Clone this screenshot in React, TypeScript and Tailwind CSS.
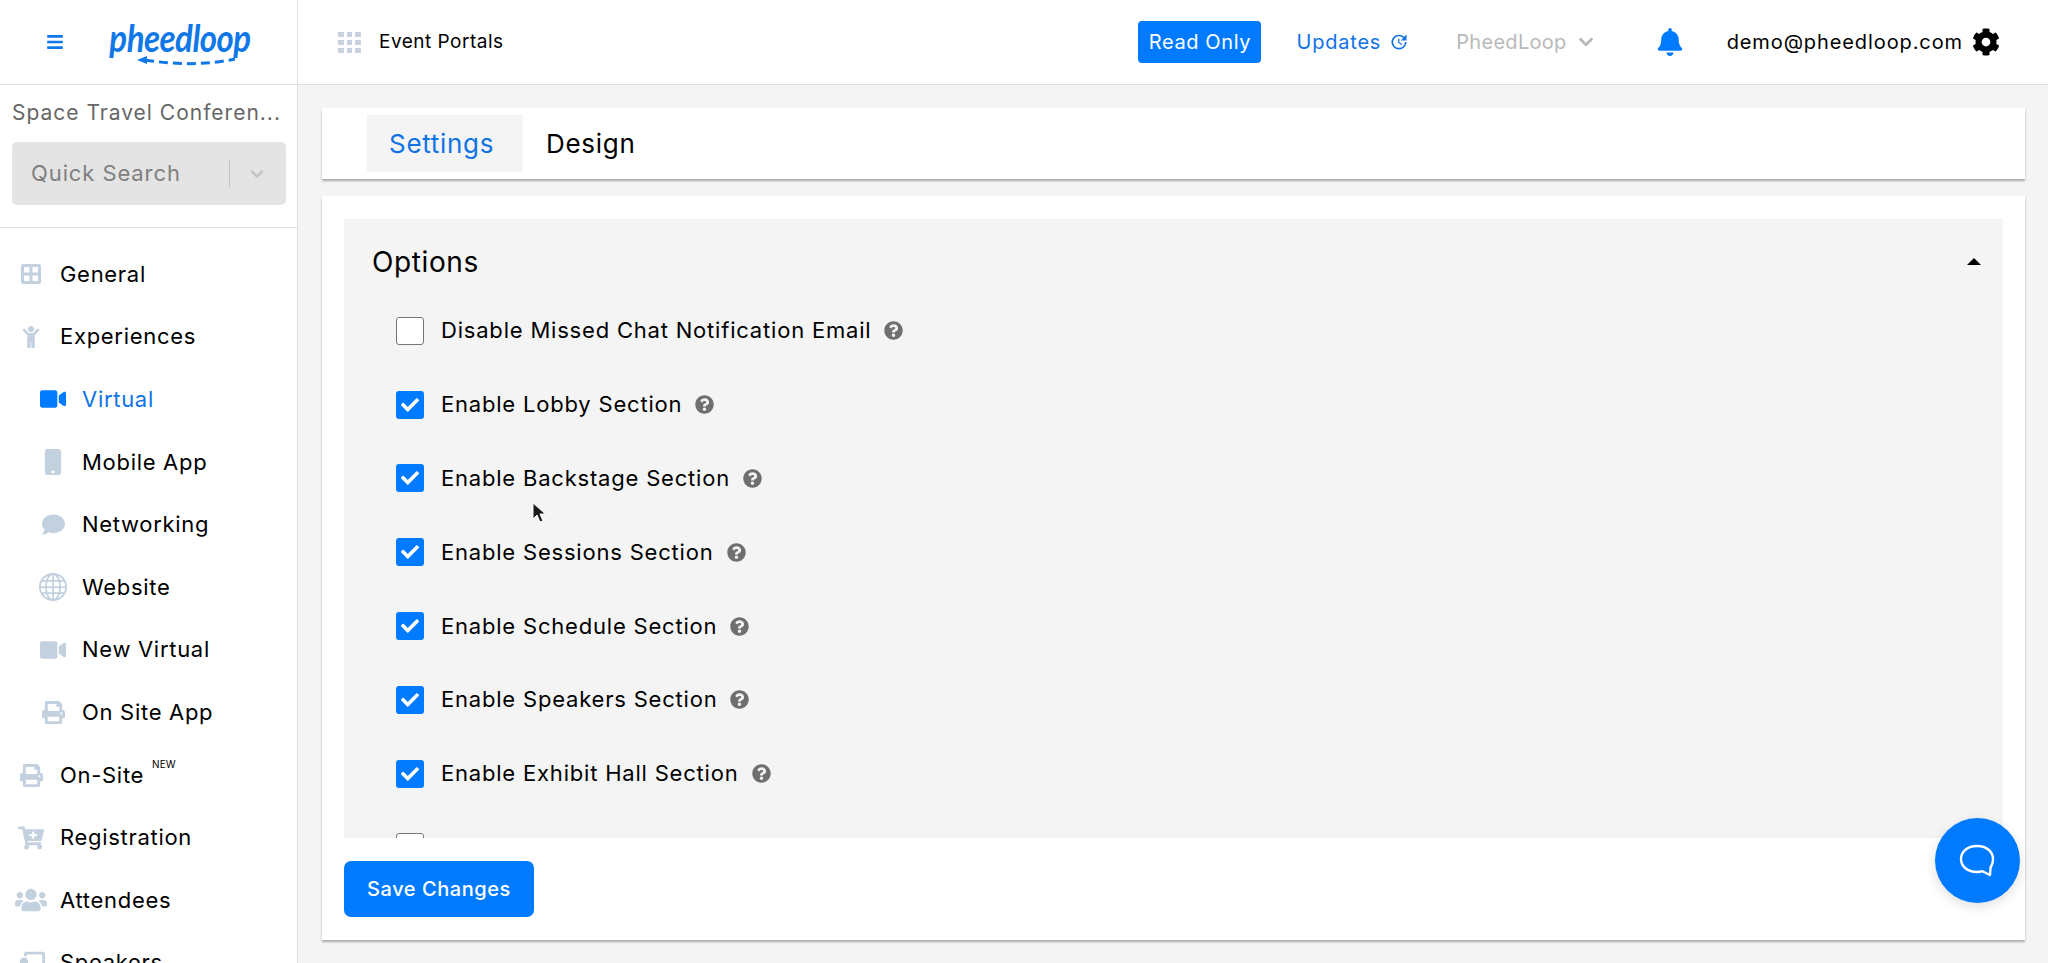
import { ChevronDown } from 'lucide-react';
import {
  FaBars,
  FaBell,
  FaCartPlus,
  FaChalkboardTeacher,
  FaCheck,
  FaChild,
  FaCog,
  FaComment,
  FaMobile,
  FaPrint,
  FaQuestionCircle,
  FaUsers,
  FaVideo,
} from 'react-icons/fa';
import { MdUpdate } from 'react-icons/md';
import { BsGlobe } from 'react-icons/bs';

function GeneralIcon({ className }: { className?: string }) {
  return (
    <svg viewBox="0 0 20 20" className={className} fill="currentColor">
      <path d="M2 0h16a2 2 0 0 1 2 2v16a2 2 0 0 1-2 2H2a2 2 0 0 1-2-2V2a2 2 0 0 1 2-2Zm1 3v5.5h5.5V3H3Zm8.5 0v5.5H17V3h-5.5ZM3 11.5V17h5.5v-5.5H3Zm8.5 0V17H17v-5.5h-5.5Z" fillRule="evenodd" />
    </svg>
  );
}

const navItems = [
  { label: 'General', icon: <GeneralIcon className="w-5 h-5" /> },
  { label: 'Experiences', icon: <FaChild className="w-[22px] h-[22px]" /> },
  { label: 'Virtual', icon: <FaVideo className="w-[26px] h-[26px]" />, sub: true, active: true },
  { label: 'Mobile App', icon: <FaMobile className="w-[26px] h-[26px]" />, sub: true },
  { label: 'Networking', icon: <FaComment className="w-[23px] h-[23px]" />, sub: true },
  { label: 'Website', icon: <BsGlobe className="w-7 h-7" />, sub: true },
  { label: 'New Virtual', icon: <FaVideo className="w-[26px] h-[26px]" />, sub: true },
  { label: 'On Site App', icon: <FaPrint className="w-[23px] h-[23px]" />, sub: true },
  { label: 'On-Site', icon: <FaPrint className="w-[23px] h-[23px]" />, badge: 'NEW' },
  { label: 'Registration', icon: <FaCartPlus className="w-[26px] h-[26px]" /> },
  { label: 'Attendees', icon: <FaUsers className="w-8 h-8" /> },
  { label: 'Speakers', icon: <FaChalkboardTeacher className="w-7 h-7" /> },
];

const options = [
  { label: 'Disable Missed Chat Notification Email', checked: false },
  { label: 'Enable Lobby Section', checked: true },
  { label: 'Enable Backstage Section', checked: true },
  { label: 'Enable Sessions Section', checked: true },
  { label: 'Enable Schedule Section', checked: true },
  { label: 'Enable Speakers Section', checked: true },
  { label: 'Enable Exhibit Hall Section', checked: true },
  { label: '', checked: false },
];

function PheedLoopLogo() {
  return (
    <div className="flex flex-col items-center w-[142px]">
      <span className="font-['Lato',sans-serif] font-bold italic text-[33px] leading-[38px] tracking-[-0.5px] scale-y-115 text-[#0f78e6]">
        pheedloop
      </span>
      <svg viewBox="-8 0 142 12" className="w-[142px] h-3 -mt-[1px]" fill="none">
        <path d="M20 5l10-4v8z" fill="#0f78e6" />
        <path d="M28 5 C60 10 90 10 118 4" stroke="#0f78e6" strokeWidth="3" strokeDasharray="9 5" />
      </svg>
    </div>
  );
}

function Header() {
  return (
    <header className="flex h-[85px] shrink-0 bg-white border-b border-[#dedede]">
      <div className="flex items-center w-[298px] shrink-0 border-r border-[#dedede] pl-[46px] gap-[46px]">
        <FaBars className="w-[18px] h-[18px] text-[#0f78e6]" />
        <div className="-ml-[1px]">
          <PheedLoopLogo />
        </div>
      </div>
      <div className="flex flex-1 items-center pl-[40px] pr-[48px]">
        <div className="grid grid-cols-3 gap-[3px] w-[23px]">
          {Array.from({ length: 9 }).map((_, i) => (
            <span key={i} className="h-[5px] bg-[#c8d3df]" />
          ))}
        </div>
        <span className="ml-[18px] text-[19px] tracking-[0.5px] text-black">Event Portals</span>
        <div className="flex items-center ml-auto">
          <button className="h-[42px] w-[123px] rounded-[4px] bg-[#007bff] text-white text-[20px] tracking-[0.6px]">Read Only</button>
          <span className="ml-[35px] text-[20px] tracking-[0.8px] text-[#0f72e5]">Updates</span>
          <MdUpdate className="ml-[8px] w-5 h-5 text-[#0f72e5]" />
          <span className="ml-[47px] text-[20px] tracking-[0.3px] text-[#b9b9b9]">PheedLoop</span>
          <ChevronDown className="ml-[8px] w-[22px] h-[22px] text-[#b9b9b9]" strokeWidth={3} />
          <FaBell className="ml-[60px] w-[26px] h-[28px] text-[#007bff]" />
          <span className="ml-[44px] text-[20px] tracking-[0.9px] text-black">demo@pheedloop.com</span>
          <FaCog className="ml-[9px] w-7 h-7 text-black" />
        </div>
      </div>
    </header>
  );
}

function Sidebar() {
  return (
    <aside className="w-[298px] shrink-0 bg-white border-r border-[#dedede] overflow-hidden">
      <div className="h-[143px] border-b border-[#dedede] pl-3 pr-[11px] pt-[13px]">
        <div className="text-[21px] leading-[30px] tracking-[1px] text-[#666] whitespace-nowrap">Space Travel Conferen...</div>
        <div className="flex items-center h-[63px] mt-[14px] rounded-[5px] bg-[#e4e4e4]">
          <span className="ml-[19px] text-[22px] tracking-[0.9px] text-[#808080]">Quick Search</span>
          <span className="ml-auto h-7 w-px bg-[#c4c4c4]" />
          <ChevronDown className="ml-[17px] mr-[19px] w-[20px] h-[20px] text-[#c4c4c4]" strokeWidth={3} />
        </div>
      </div>
      <nav className="pt-[15px]">
        {navItems.map((item) => (
          <div key={item.label} className="flex items-center h-[62.6px]">
            <div
              className={`flex items-center justify-center w-10 shrink-0 ${item.sub ? 'ml-[33px]' : 'ml-[11px]'} ${
                item.active ? 'text-[#007bff]' : 'text-[#c3d1df]'
              }`}
            >
              {item.icon}
            </div>
            <span className={`ml-[9px] text-[22px] tracking-[0.7px] ${item.active ? 'text-[#0f72e5]' : 'text-black'}`}>{item.label}</span>
            {item.badge && <sup className="ml-2 -mt-3 text-[10px] font-normal text-black">{item.badge}</sup>}
          </div>
        ))}
      </nav>
    </aside>
  );
}

function OptionRow({ label, checked }: { label: string; checked: boolean }) {
  return (
    <div className="flex items-center h-[73.8px] shrink-0">
      {checked ? (
        <span className="flex items-center justify-center w-[28px] h-[28px] rounded-[3px] bg-[#007bff]">
          <FaCheck className="w-[18px] h-[18px] text-white" />
        </span>
      ) : (
        <span className="w-[28px] h-[28px] rounded-[3px] border border-[#777] bg-white" />
      )}
      <span className="ml-[17px] text-[22px] tracking-[0.8px] text-black">{label}</span>
      <FaQuestionCircle className="ml-[13px] w-[19px] h-[19px] text-[#6f6f6f]" />
    </div>
  );
}

export default function App() {
  return (
    <div className="relative flex flex-col h-[963px] overflow-hidden bg-[#f4f4f4] font-['Inter',sans-serif]">
      <Header />
      <div className="flex flex-1 min-h-0">
        <Sidebar />
        <main className="flex flex-col flex-1 min-w-0 pl-[24px] pr-[23px] pt-[23px]">
          <div className="flex items-center h-[71px] bg-white shadow-[0_2px_2px_rgba(0,0,0,0.3)] pl-[45px]">
            <div className="flex items-center w-[156px] h-[57px] pl-[22px] bg-[#f4f4f4] text-[26px] tracking-[0.7px] text-[#0f72e5]">Settings</div>
            <div className="ml-[23px] text-[26px] tracking-[0.7px] text-black">Design</div>
          </div>
          <div className="flex flex-col h-[744px] mt-[17px] px-[22px] pt-[23px] bg-white shadow-[0_2px_2px_rgba(0,0,0,0.3)]">
            <section className="h-[619px] overflow-hidden bg-[#f4f4f4]">
              <div className="flex items-center justify-between h-[85px] pl-[28px] pr-[22px]">
                <h2 className="text-[28px] font-normal tracking-[0.6px] text-black">Options</h2>
                <span className="w-0 h-0 border-x-[7px] border-x-transparent border-b-[7px] border-b-black" />
              </div>
              <div className="flex flex-col pl-[52px] -mt-[10px]">
                {options.map((option) => (
                  <OptionRow key={option.label} label={option.label} checked={option.checked} />
                ))}
              </div>
            </section>
            <button className="mt-[23px] w-[190px] h-[56px] rounded-[7px] bg-[#007bff] text-white text-[20px] font-medium tracking-[0.55px]">Save Changes</button>
          </div>
        </main>
      </div>

      {/* chat launcher */}
      <div className="absolute left-[1935px] top-[818px] flex items-center justify-center w-[85px] h-[85px] rounded-full bg-[#007bff] shadow-[0_4px_12px_rgba(0,0,0,0.12)]">
        <svg viewBox="0 0 36 34" className="w-[36px] h-[34px] -ml-[2px]" fill="none" stroke="white" strokeWidth="2.4" strokeLinejoin="round">
          <path d="M18 2C8.500 2 2 7.600 2 15s6.500 13 16 13c2 0 3.600-.2 5.400-.8L31 31l.6-7.500C33.400 21 34 18 34 15 34 7.600 27.500 2 18 2Z" />
        </svg>
      </div>

      {/* mouse pointer */}
      <svg viewBox="0 0 14 22" className="absolute left-[532px] top-[502px] w-[14px] h-[22px]">
        <path d="M1 1v16l4-4 3 7 3-1-3-7h5.500Z" fill="#1a1a1a" stroke="white" strokeWidth="1" />
      </svg>
    </div>
  );
}
